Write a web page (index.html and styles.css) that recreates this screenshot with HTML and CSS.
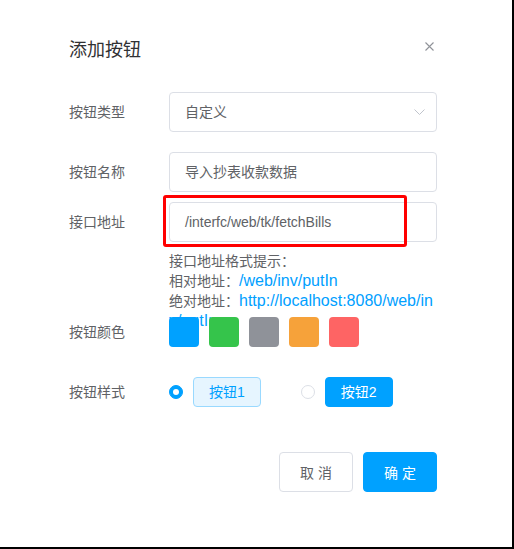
FILE: index.html
```html
<!DOCTYPE html>
<html lang="zh-CN">
<head>
    <meta charset="UTF-8">
    <meta name="viewport" content="width=device-width, initial-scale=1.0">
    <title>添加按钮</title>
    <link rel="stylesheet" href="styles.css">
</head>
<body>
    <div class="dialog">
        <div class="dialog-header">
            <span class="dialog-title">添加按钮</span>
            <span class="dialog-close">
                <svg width="9" height="9" viewBox="0 0 9 9"><path d="M0.5 0.5L8.5 8.5M8.5 0.5L0.5 8.5" stroke="#909399" stroke-width="1.1" fill="none"/></svg>
            </span>
        </div>

        <div class="form">
            <div class="form-item">
                <label class="form-label">按钮类型</label>
                <div class="input select">
                    <span>自定义</span>
                    <svg class="select-arrow" width="11" height="6" viewBox="0 0 11 6"><path d="M0.5 0.5L5.5 5.5L10.5 0.5" stroke="#c0c4cc" stroke-width="1" fill="none"/></svg>
                </div>
            </div>

            <div class="form-item tight">
                <label class="form-label">按钮名称</label>
                <div class="input">导入抄表收款数据</div>
            </div>

            <div class="form-item url-item">
                <label class="form-label">接口地址</label>
                <div class="form-content">
                    <div class="input">/interfc/web/tk/fetchBills</div>
                    <div class="hint">
                        接口地址格式提示：<br>
                        相对地址：<span class="hint-link">/web/inv/putIn</span><br>
                        绝对地址：<span class="hint-link">http://localhost:8080/web/inv/putIn</span>
                    </div>
                </div>
            </div>

            <div class="form-item">
                <label class="form-label">按钮颜色</label>
                <div class="swatches">
                    <span class="swatch blue"></span>
                    <span class="swatch green"></span>
                    <span class="swatch gray"></span>
                    <span class="swatch orange"></span>
                    <span class="swatch red"></span>
                </div>
            </div>

            <div class="form-item">
                <label class="form-label">按钮样式</label>
                <div class="radios">
                    <div class="radio-option">
                        <span class="radio checked"></span>
                        <span class="style-btn plain">按钮1</span>
                    </div>
                    <div class="radio-option">
                        <span class="radio"></span>
                        <span class="style-btn solid">按钮2</span>
                    </div>
                </div>
            </div>
        </div>

        <div class="dialog-footer">
            <button class="btn btn-default">取 消</button>
            <button class="btn btn-primary">确 定</button>
        </div>

        <!-- highlight around the url field -->
        <div class="highlight"></div>
    </div>
</body>
</html>
```

FILE: styles.css
```css
/* Add button dialog */
body {
    margin: 0;
    background: #fff;
    font-family: "Liberation Sans", "Noto Sans CJK SC", sans-serif;
    color: #606266;
}
.dialog {
    position: relative;
    width: 512px;
    height: 547px;
    box-sizing: content-box;
    border-right: 2px solid #000;
    border-bottom: 2px solid #000;
    background: #fff;
    padding: 0;
}
.dialog-header {
    display: flex;
    justify-content: space-between;
    width: 368px;
    margin-left: 69px;
    padding-top: 38px;
}
.dialog-title {
    font-size: 18px;
    line-height: 24px;
    color: #303133;
}
.dialog-close {
    display: block;
    width: 9px;
    height: 9px;
    margin-top: 4px;
    margin-right: 3px;
}
.dialog-close svg {
    display: block;
}

/* Form */
.form {
    margin-top: 30px;
    margin-left: 69px;
    width: 368px;
}
.form-item {
    display: flex;
    margin-bottom: 20px;
}
.form-item.tight {
    margin-bottom: 10px;
}
.form-item.url-item {
    margin-bottom: 0;
}
.form-label {
    width: 100px;
    flex: none;
    font-size: 14px;
    line-height: 40px;
    color: #606266;
}
.form-content {
    width: 268px;
}
.input {
    box-sizing: border-box;
    width: 268px;
    height: 40px;
    padding: 0 15px;
    border: 1px solid #dcdfe6;
    border-radius: 4px;
    font-size: 14px;
    line-height: 38px;
    color: #606266;
}
.select {
    display: flex;
    justify-content: space-between;
    align-items: center;
    padding-right: 11px;
}
.select-arrow {
    display: block;
}
.hint {
    height: 60px;
    margin-top: 10px;
    font-size: 14px;
    line-height: 19px;
    color: #606266;
    word-break: break-all;
}
.hint-link {
    font-size: 16px;
    color: #00a0ff;
}

/* Colour swatches */
.swatches {
    display: flex;
    align-items: center;
    gap: 10px;
    height: 40px;
}
.swatch {
    width: 30px;
    height: 30px;
    border-radius: 4px;
}
.swatch.blue { background: #00a1ff; }
.swatch.green { background: #35c44b; }
.swatch.gray { background: #8f9299; }
.swatch.orange { background: #f6a23a; }
.swatch.red { background: #fe6464; }

/* Style radios */
.radios {
    display: flex;
    align-items: center;
    gap: 40px;
    height: 40px;
}
.radio-option {
    display: flex;
    align-items: center;
    gap: 10px;
}
.radio {
    box-sizing: border-box;
    width: 14px;
    height: 14px;
    border: 1px solid #dcdfe6;
    border-radius: 50%;
    background: #fff;
}
.radio.checked {
    position: relative;
    border-color: #00a1ff;
    background: #00a1ff;
}
.radio.checked::after {
    content: "";
    position: absolute;
    left: 3px;
    top: 3px;
    width: 6px;
    height: 6px;
    border-radius: 50%;
    background: #fff;
}
.style-btn {
    box-sizing: border-box;
    height: 30px;
    padding: 0 15px;
    border: 1px solid transparent;
    border-radius: 4px;
    font-size: 14px;
    line-height: 28px;
}
.style-btn.plain {
    background: #e6f5ff;
    border-color: #99d9ff;
    color: #00a1ff;
}
.style-btn.solid {
    background: #00a1ff;
    border-color: #00a1ff;
    color: #fff;
}

/* Footer */
.dialog-footer {
    display: flex;
    justify-content: flex-end;
    gap: 10px;
    width: 368px;
    margin-left: 69px;
    margin-top: 40px;
}
.btn {
    box-sizing: border-box;
    width: 74px;
    height: 40px;
    border: 1px solid #dcdfe6;
    border-radius: 4px;
    font-family: inherit;
    font-size: 14px;
    cursor: pointer;
    padding: 0;
}
.btn-default {
    background: #fff;
    color: #606266;
}
.btn-primary {
    background: #00a1ff;
    border-color: #00a1ff;
    color: #fff;
}

.highlight {
    position: absolute;
    left: 163px;
    top: 195px;
    width: 244px;
    height: 52px;
    box-sizing: border-box;
    border: 3px solid #ff0000;
    border-radius: 3px;
}
```
